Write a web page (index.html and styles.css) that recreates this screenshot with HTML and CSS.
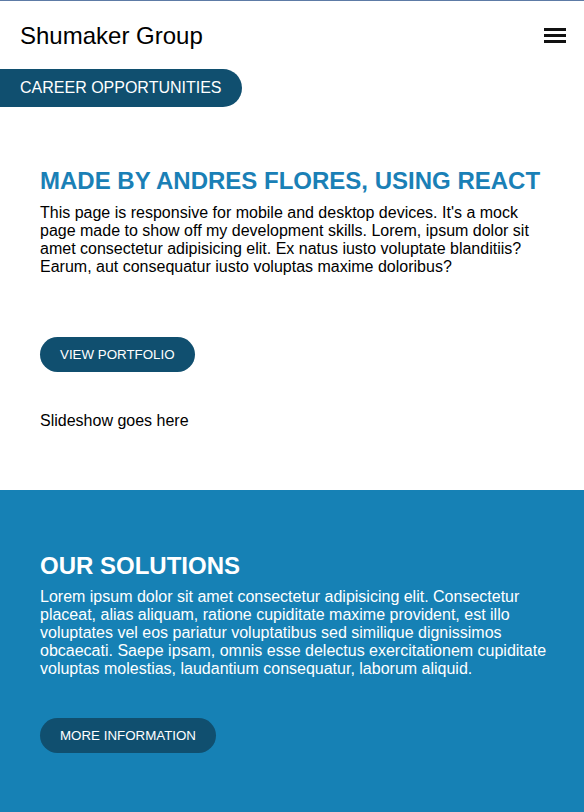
FILE: index.html
```html
<!DOCTYPE html>
<html lang="en">
<head>
<meta charset="utf-8">
<title>Shumaker Group</title>
<link rel="stylesheet" href="styles.css">
</head>
<body>
<header class="topbar">
  <div class="brand">Shumaker Group</div>
  <button class="menu" aria-label="Menu">
    <svg width="22" height="15" viewBox="0 0 22 15"><rect x="0" y="0" width="22" height="3" fill="#111"/><rect x="0" y="6" width="22" height="3" fill="#111"/><rect x="0" y="12" width="22" height="3" fill="#111"/></svg>
  </button>
</header>
<a class="career" href="#">CAREER OPPORTUNITIES</a>
<section class="intro">
  <h1 class="title">MADE BY ANDRES FLORES, USING REACT</h1>
  <p class="text">This page is responsive for mobile and desktop devices. It's a mock page made to show off my development skills. Lorem, ipsum dolor sit amet consectetur adipisicing elit. Ex natus iusto voluptate blanditiis? Earum, aut consequatur iusto voluptas maxime doloribus?</p>
  <a class="pill" href="#">VIEW PORTFOLIO</a>
  <p class="slides">Slideshow goes here</p>
</section>
<section class="solutions">
  <h2 class="title light">OUR SOLUTIONS</h2>
  <p class="text light">Lorem ipsum dolor sit amet consectetur adipisicing elit. Consectetur placeat, alias aliquam, ratione cupiditate maxime provident, est illo voluptates vel eos pariatur voluptatibus sed similique dignissimos obcaecati. Saepe ipsam, omnis esse delectus exercitationem cupiditate voluptas molestias, laudantium consequatur, laborum aliquid.</p>
  <a class="pill more" href="#">MORE INFORMATION</a>
</section>
</body>
</html>
```
FILE: styles.css
```css
html, body {
  margin: 0;
  padding: 0;
}
body {
  font-family: "Liberation Sans", Arial, sans-serif;
  color: #000;
  background: #fff;
  border-top: 1px solid #5d7ba6;
  min-height: 811px;
  display: flex;
  flex-direction: column;
}
.topbar {
  display: flex;
  justify-content: space-between;
  align-items: center;
  padding: 21px 18px 0 20px;
}
.brand {
  font-size: 24px;
  line-height: 28px;
}
.menu {
  background: none;
  border: 0;
  padding: 0;
  display: flex;
  margin-top: -1px;
}
.career {
  align-self: flex-start;
  margin-top: 19px;
  display: block;
  width: 242px;
  height: 38px;
  line-height: 38px;
  padding-left: 20px;
  background: #104f6f;
  color: #fff;
  font-size: 16px;
  text-decoration: none;
  border-radius: 0 19px 19px 0;
  box-sizing: border-box;
}
.intro {
  padding: 60px 40px 60px;
  display: flex;
  flex-direction: column;
  align-items: flex-start;
}
.title {
  margin: 0;
  font-size: 24px;
  line-height: 28px;
  font-weight: bold;
  color: #1a80b6;
}
.text {
  margin: 9px 0 0;
  font-size: 16px;
  line-height: 18px;
}
.pill {
  display: inline-block;
  margin-top: 61px;
  height: 35px;
  line-height: 35px;
  padding: 0 20px;
  border-radius: 18px;
  background: #104f6f;
  color: #fff;
  font-size: 13.333px;
  text-decoration: none;
}
.slides {
  margin: 40px 0 0;
  font-size: 16px;
  line-height: 18px;
}
.solutions {
  flex: 1;
  background: #1681b5;
  padding: 62px 20px 40px 40px;
  display: flex;
  flex-direction: column;
  align-items: flex-start;
}
.solutions .text {
  margin-top: 8px;
}
.light {
  color: #fff;
}
.more {
  margin-top: 40px;
}
```
